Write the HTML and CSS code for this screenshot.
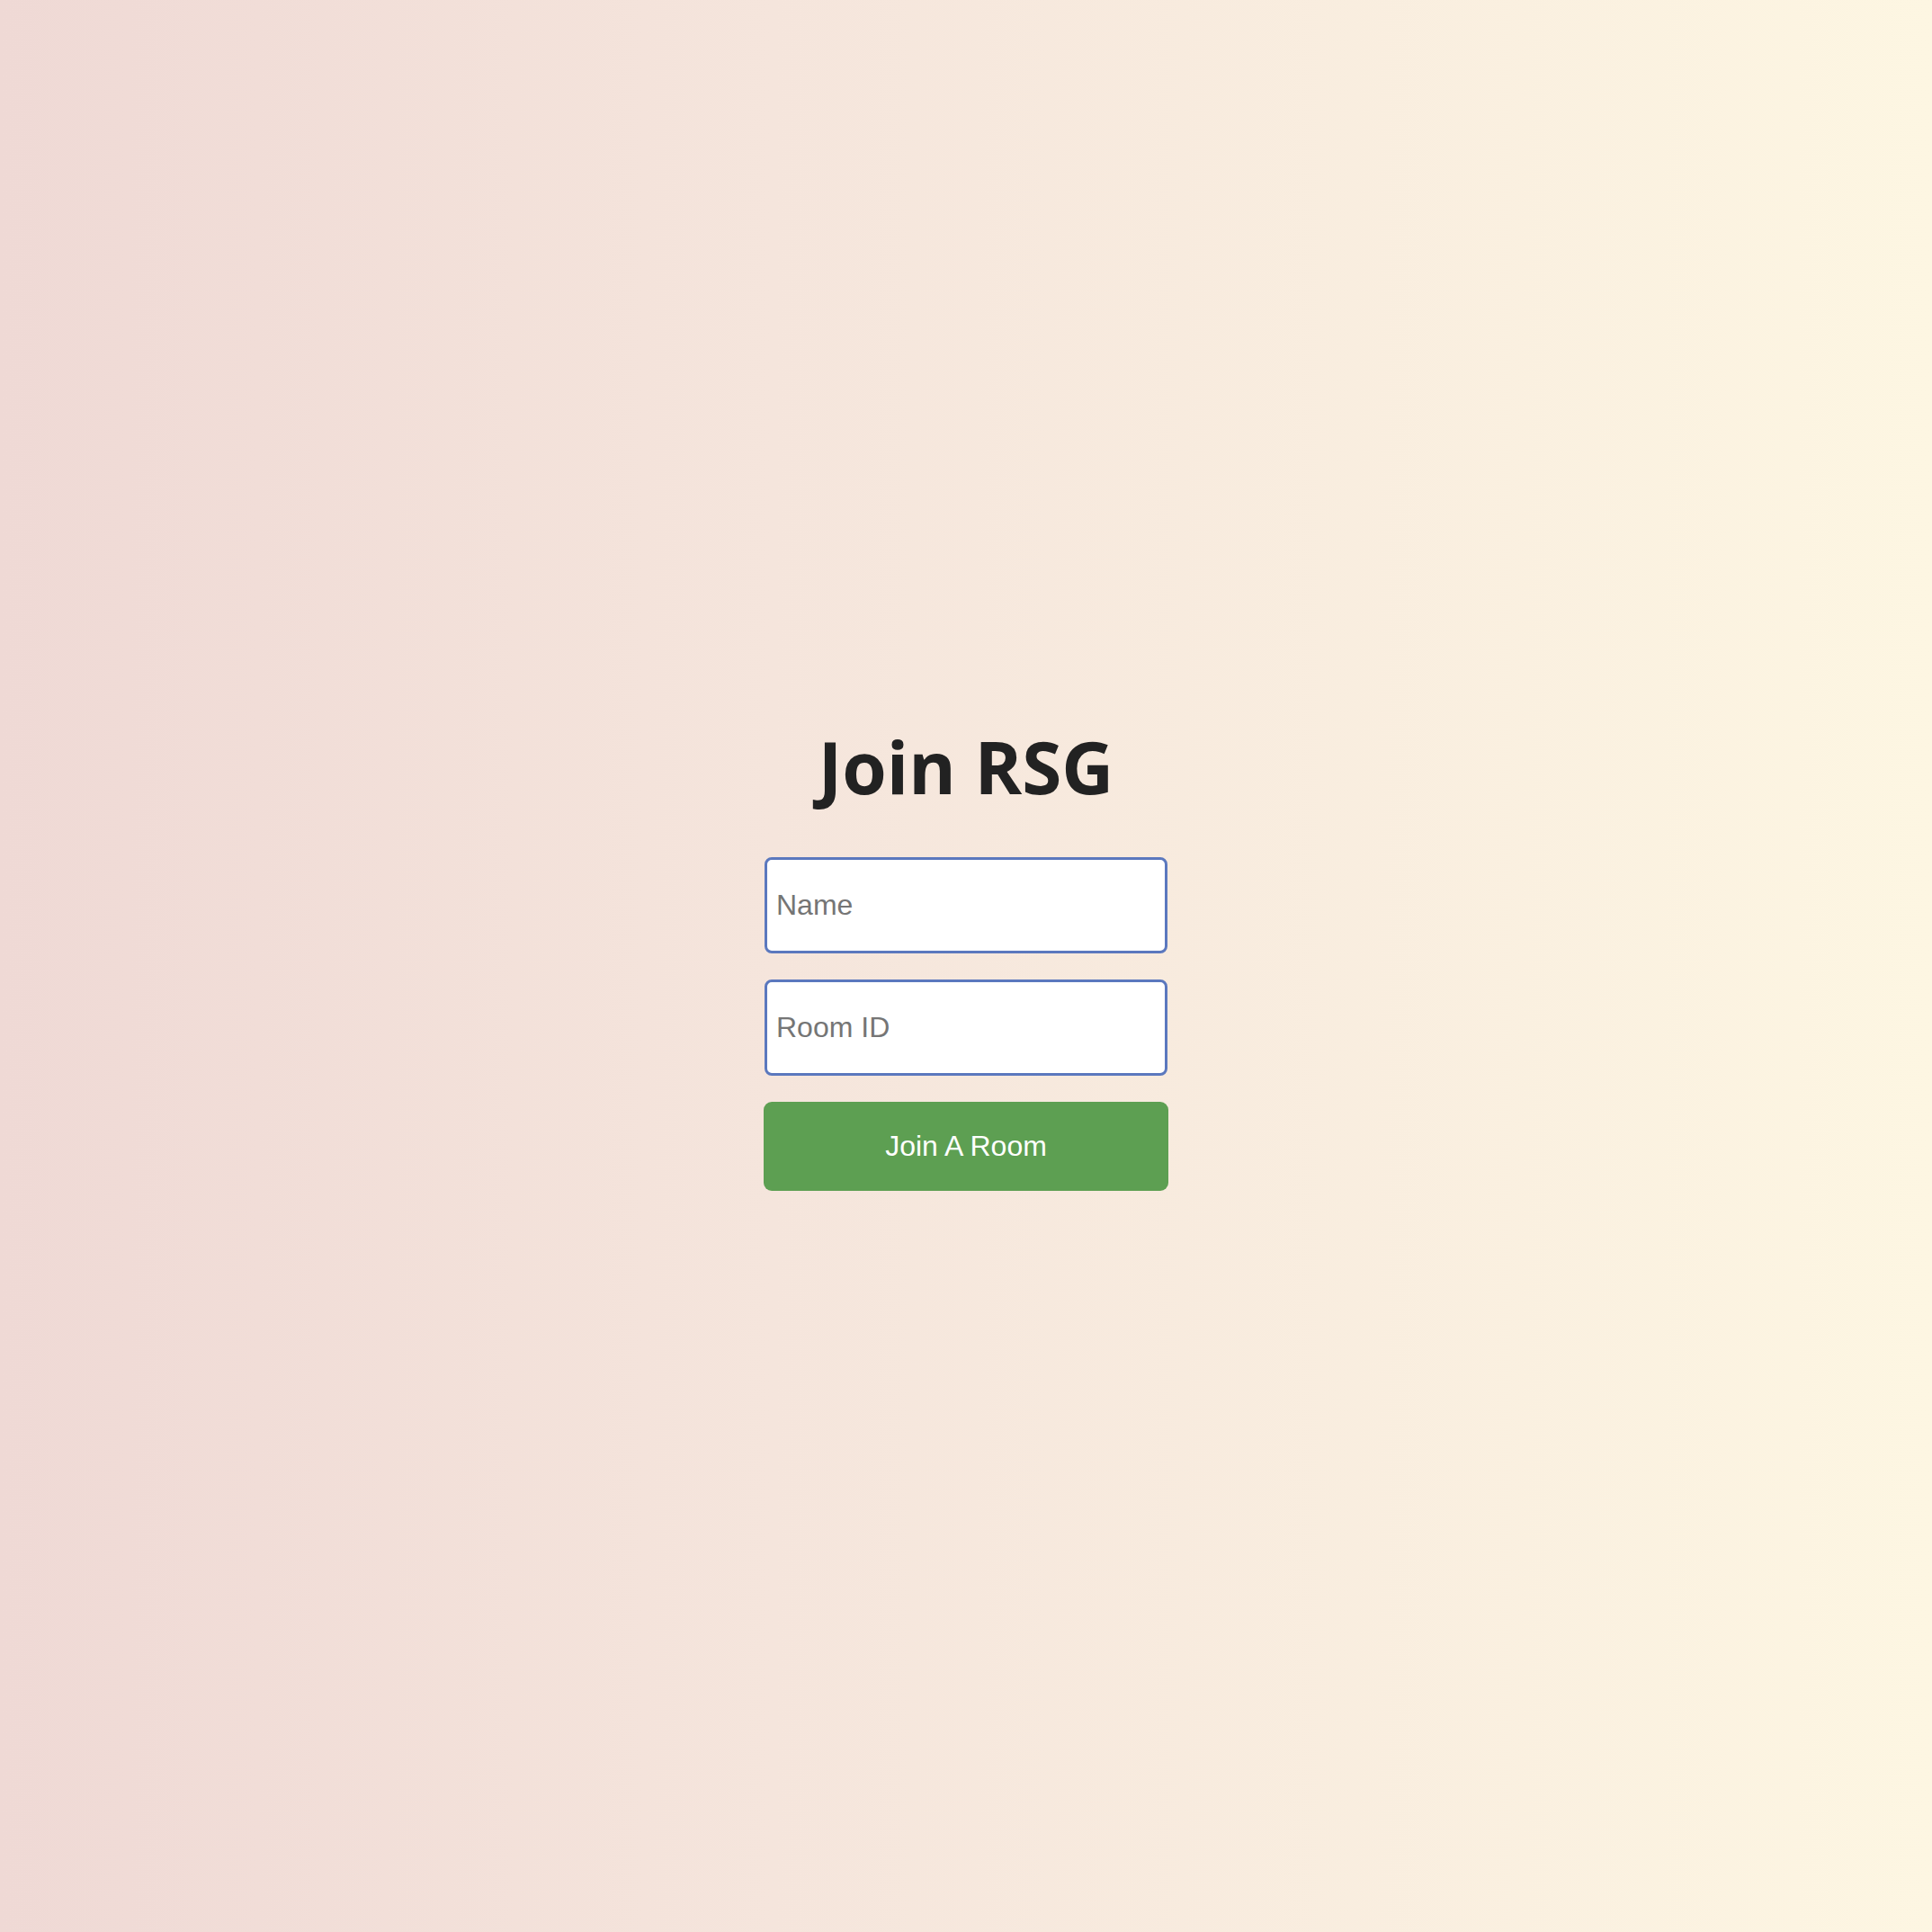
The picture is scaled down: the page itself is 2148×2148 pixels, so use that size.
FILE: index.html
```html
<!DOCTYPE html>
<html lang="en">
<head>
<meta charset="utf-8">
<title>Join RSG</title>
<link rel="stylesheet" href="styles.css">
</head>
<body>
<main class="page">
  <form class="join-form">
    <h1 class="title">Join RSG</h1>
    <input class="field" type="text" placeholder="Name">
    <input class="field" type="text" placeholder="Room ID">
    <button class="join-btn" type="button">Join A Room</button>
  </form>
</main>
</body>
</html>
```

FILE: styles.css
```css
html, body {
  margin: 0;
  padding: 0;
}
body {
  min-height: 100vh;
  background: linear-gradient(to right, #efd9d5 0%, #f5e5dc 40%, #fdf6e2 100%);
  font-family: "Liberation Sans", Arial, sans-serif;
}
.page {
  min-height: 100vh;
  display: flex;
  align-items: center;
  justify-content: center;
}
.join-form {
  display: flex;
  flex-direction: column;
  align-items: center;
  gap: 29px;
  margin-top: -12px;
}
.title {
  font-family: "Open Sans", sans-serif;
  font-weight: 700;
  font-size: 80px;
  line-height: 1;
  color: #222222;
  margin: 0 0 32px 0;
}
.field {
  box-sizing: border-box;
  width: 448px;
  height: 107px;
  border: 3px solid #5b78be;
  border-radius: 8px;
  background: #ffffff;
  padding: 0 10px;
  font-family: "Liberation Sans", Arial, sans-serif;
  font-size: 32px;
  color: #222;
  outline: none;
}
.field::placeholder {
  color: #757575;
}
.join-btn {
  box-sizing: border-box;
  width: 450px;
  height: 99px;
  border: none;
  border-radius: 9px;
  background: #5d9f52;
  color: #ffffff;
  font-family: "Liberation Sans", Arial, sans-serif;
  font-size: 32px;
  cursor: pointer;
}
```
